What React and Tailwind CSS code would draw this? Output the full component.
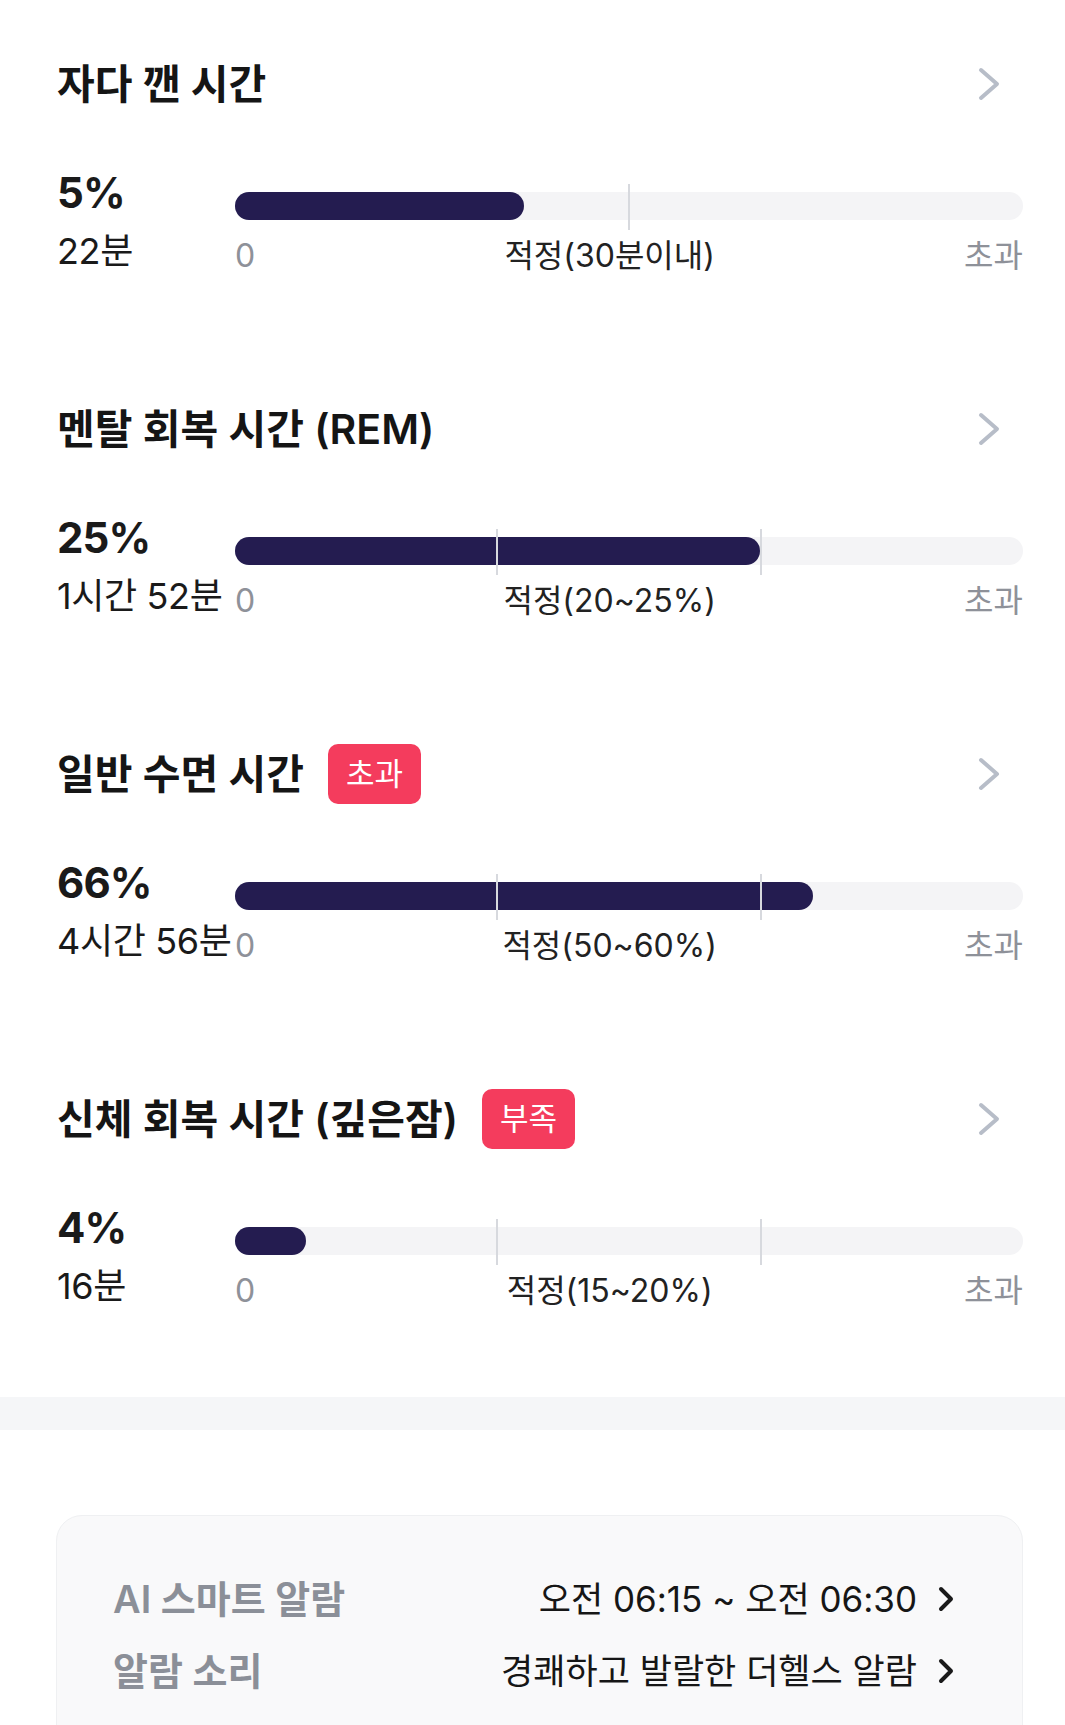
import React from 'react';

const font = { fontFamily: 'Inter, "Noto Sans CJK KR", sans-serif' };

const stages = [
  { title: '자다 깬 시간', badge: null, pct: '5%', time: '22분', fill: 289, ticks: [50], range: '적정(30분이내)' },
  { title: '멘탈 회복 시간 (REM)', badge: null, pct: '25%', time: '1시간 52분', fill: 525, ticks: [33.3, 66.7], range: '적정(20~25%)' },
  { title: '일반 수면 시간', badge: '초과', pct: '66%', time: '4시간 56분', fill: 578, ticks: [33.3, 66.7], range: '적정(50~60%)' },
  { title: '신체 회복 시간 (깊은잠)', badge: '부족', pct: '4%', time: '16분', fill: 71, ticks: [33.3, 66.7], range: '적정(15~20%)' },
];

function Chevron({ className, w, h, sw }) {
  return (
    <svg width={w} height={h} viewBox={`0 0 ${w} ${h}`} fill="none" className={className}>
      <polyline
        points={`${sw} ${sw}, ${w - sw} ${h / 2}, ${sw} ${h - sw}`}
        stroke="currentColor"
        strokeWidth={sw}
        strokeLinecap="round"
        strokeLinejoin="round"
      />
    </svg>
  );
}

function Stage({ s, last }) {
  return (
    <div className={last ? 'mb-[86px]' : 'mb-[123px]'}>
      <div className="h-[60px] flex items-center justify-between pr-[22px]">
        <div className="flex items-center gap-[24px]">
          <span className="text-[41px] font-semibold text-[#151515] leading-none whitespace-nowrap">{s.title}</span>
          {s.badge && (
            <span className="w-[93px] h-[60px] rounded-[10px] bg-[#f43c5d] text-white text-[31px] flex items-center justify-center">
              {s.badge}
            </span>
          )}
        </div>
        <Chevron w={24} h={36} sw={4} className="text-[#b7bdc8]" />
      </div>

      <div className="mt-[54px] flex">
        <div className="w-[178px] shrink-0 text-[#1a1a1a]">
          <div className="text-[42px] font-bold leading-[50px] tracking-[-0.02em]">{s.pct}</div>
          <div className="mt-[11px] text-[36px] leading-[44px] tracking-[-0.01em] whitespace-nowrap">{s.time}</div>
        </div>
        <div className="flex-1 pt-[24px]">
          <div className="relative h-[28px] rounded-full bg-[#f4f4f6]">
            <div className="h-full rounded-full bg-[#241c50]" style={{ width: s.fill }} />
            {s.ticks.map(t => (
              <div
                key={t}
                className="absolute top-[-8px] h-[46px] w-[2px] bg-[#d7d9de]"
                style={{ left: `calc(${t}% - 1px)` }}
              />
            ))}
          </div>
          <div className="mt-[16px] flex justify-between items-center leading-[40px] text-[32px]">
            <span className="text-[#8e9199]">0</span>
            <span className="text-[#222]">{s.range}</span>
            <span className="text-[#8e9199]">초과</span>
          </div>
        </div>
      </div>
    </div>
  );
}

export default function App() {
  return (
    <div className="w-[1065px] bg-white overflow-hidden" style={font}>
      <div className="pt-[54px] pl-[57px] pr-[42px]">
        {stages.map((s, i) => (
          <Stage key={s.title} s={s} last={i === stages.length - 1} />
        ))}
      </div>

      <div className="h-[33px] bg-[#f5f6f8]" />

      <div className="pt-[85px] px-[42px] pl-[56px] pb-[60px]">
        <div className="rounded-[26px] border border-[#eff0f2] bg-[#f9f9fa] pt-[58px] pb-[80px] pl-[56px] pr-[67px]">
          <div className="flex items-center justify-between h-[50px]">
            <span className="text-[38px] font-semibold text-[#8b8f98]">AI 스마트 알람</span>
            <div className="flex items-center gap-[20px]">
              <span className="text-[35px] text-[#161616]">오전 06:15 ~ 오전 06:30</span>
              <Chevron w={18} h={28} sw={4} className="text-[#1a1a1a]" />
            </div>
          </div>
          <div className="mt-[22px] flex items-center justify-between h-[50px]">
            <span className="text-[38px] font-semibold text-[#8b8f98]">알람 소리</span>
            <div className="flex items-center gap-[20px]">
              <span className="text-[35px] text-[#161616]">경쾌하고 발랄한 더헬스 알람</span>
              <Chevron w={18} h={28} sw={4} className="text-[#1a1a1a]" />
            </div>
          </div>
          <div className="h-[120px]" />
        </div>
      </div>
    </div>
  );
}
